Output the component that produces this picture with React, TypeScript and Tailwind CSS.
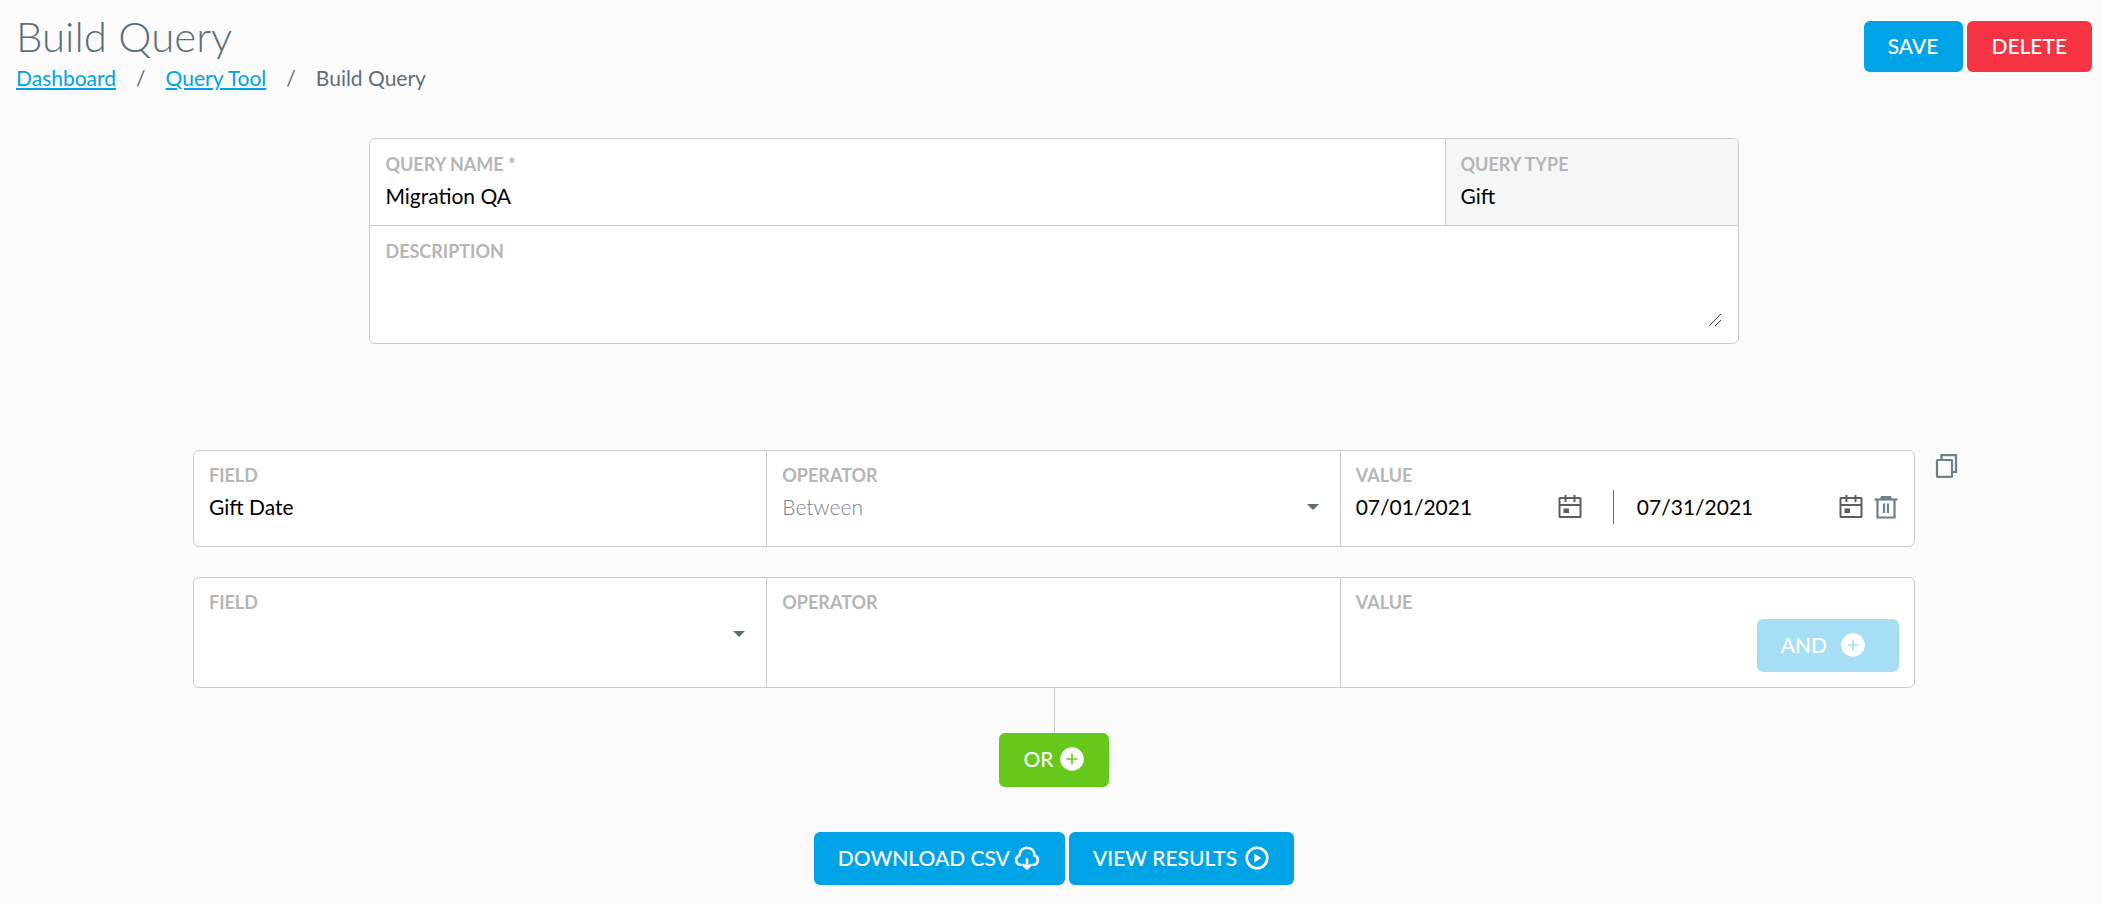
import React, { useState } from "react";

const labelClass = "block text-[18px] leading-6 font-bold uppercase text-[#b5b5b5]";
const inputClass = "w-full min-w-0 bg-transparent text-[21px] leading-10 text-black outline-none";
const selectClass =
  "w-full appearance-none bg-transparent text-[21px] leading-10 font-light text-[#75858c] outline-none";
const buttonClass =
  "inline-flex items-center rounded-md pb-[2px] pl-6 text-[21px] leading-6 font-medium uppercase text-white";

function CalendarIcon() {
  return (
    <svg className="h-6 w-6 shrink-0 text-[#5b5f63]" viewBox="0 0 24 24" fill="none" stroke="currentColor" strokeWidth="2">
      <rect x="1.5" y="3" width="21" height="19" rx="0.5" />
      <path d="M1 10h22M7.5 0v7M16.5 0v7" />
      <rect x="5.5" y="13.5" width="5.5" height="4.5" fill="currentColor" stroke="none" />
    </svg>
  );
}

function TrashIcon() {
  return (
    <svg className="h-6 w-6" viewBox="0 0 24 24" fill="none" stroke="currentColor" strokeWidth="2.2">
      <path d="M0.5 4.5h23" />
      <path d="M6 4l1-3h10l1 3z" fill="currentColor" stroke="none" />
      <path d="M3.5 4.5V22.5h17V4.5" />
      <path d="M10 8.5v9.5M14 8.5v9.5" />
    </svg>
  );
}

function CopyIcon() {
  return (
    <svg className="h-6 w-6" viewBox="0 0 24 24" fill="none" stroke="currentColor" strokeWidth="2.2">
      <rect x="2" y="6" width="15" height="16.8" rx="0.5" />
      <path d="M6.5 6V1.2H21v16.8h-4" />
    </svg>
  );
}

function PlusIcon() {
  return (
    <svg className="h-6 w-6" viewBox="0 0 24 24">
      <path
        fillRule="evenodd"
        fill="currentColor"
        d="M12 0.2a11.8 11.8 0 1 0 0 23.6a11.8 11.8 0 0 0 0-23.6zM11.2 6.5h1.6v4.7h4.7v1.6h-4.7v4.7h-1.6v-4.7H6.5v-1.6h4.7z"
      />
    </svg>
  );
}

function CloudIcon() {
  return (
    <svg className="h-6 w-[26px]" viewBox="0 0 26 24" fill="none" stroke="currentColor" strokeWidth="2.6" strokeLinecap="round" strokeLinejoin="round">
      <path d="M6.5 18.8a4.7 4.7 0 0 1-1-9.2C5.5 5 8.5 1.8 13 1.8s7.5 3.2 7.5 7.8a4.7 4.7 0 0 1-1 9.2" />
      <path d="M13 13.5v8.5M9.5 19l3.5 3.5l3.5-3.5" />
    </svg>
  );
}

function PlayIcon() {
  return (
    <svg className="h-6 w-6" viewBox="0 0 24 24" fill="none" stroke="currentColor" strokeWidth="2.6">
      <circle cx="12" cy="12" r="10.3" />
      <path d="M9.3 7.5v9l7-4.5z" fill="currentColor" stroke="none" />
    </svg>
  );
}

function Caret() {
  return (
    <svg className="pointer-events-none mr-[6px] h-[6px] w-[12px] shrink-0 text-[#5c6c75]" viewBox="0 0 12 6">
      <path d="M0 0h12l-6 6z" fill="currentColor" />
    </svg>
  );
}

function App() {
  const [name, setName] = useState("Migration QA");
  const [description, setDescription] = useState("");
  const [operator, setOperator] = useState("Between");
  const [field, setField] = useState("");
  const [from, setFrom] = useState("07/01/2021");
  const [to, setTo] = useState("07/31/2021");

  return (
    <div className="min-h-screen bg-[#fbfbfb] pt-[11px] pr-[10px] pb-4 pl-4 font-['Lato',sans-serif] text-[#5f6f78]">
      <header className="flex items-start justify-between">
        <div>
          <h1 className="text-[42px] leading-[50px] font-light">Build Query</h1>
          <nav aria-label="Breadcrumb" className="flex gap-5 text-[21px] leading-[34px]">
            <a href="#dashboard" className="text-[#00a3e6] underline">Dashboard</a>
            <span>/</span>
            <a href="#query-tool" className="text-[#00a3e6] underline">Query Tool</a>
            <span>/</span>
            <span>Build Query</span>
          </nav>
        </div>
        <div className="flex gap-1 pt-[10px]">
          <button type="button" className={`${buttonClass} h-[51px] bg-[#00a4e6] pr-[25px]`}>Save</button>
          <button type="button" className={`${buttonClass} h-[51px] bg-[#f63343] pr-[25px]`}>Delete</button>
        </div>
      </header>

      <main className="flex flex-col items-center pt-[43px]">
        <section className="w-[65.95%] overflow-hidden rounded-md border border-[#c8cacb] bg-white">
          <div className="flex border-b border-[#c8cacb]">
            <div className="h-[86px] flex-1 px-[15px] pt-[13px]">
              <label htmlFor="name" className={labelClass}>Query Name *</label>
              <input id="name" className={inputClass} value={name} onChange={(e) => setName(e.target.value)} />
            </div>
            <div className="h-[86px] w-[293px] border-l border-[#c8cacb] bg-[#f5f7f7] px-[15px] pt-[13px]">
              <label htmlFor="type" className={labelClass}>Query Type</label>
              <input id="type" className={inputClass} value="Gift" readOnly />
            </div>
          </div>
          <div className="px-[15px] pt-[13px] pb-4">
            <label htmlFor="description" className={labelClass}>Description</label>
            <div className="relative">
              <textarea
                id="description"
                className="block h-16 w-full resize-none bg-transparent text-[21px] leading-8 text-black outline-none"
                value={description}
                onChange={(e) => setDescription(e.target.value)}
              />
              <svg className="pointer-events-none absolute right-[2px] bottom-px h-3 w-3 text-[#444]" viewBox="0 0 12 12" stroke="currentColor" shapeRendering="crispEdges">
                <path d="M0 12L12 0M6 12l6-6" />
              </svg>
            </div>
          </div>
        </section>

        <div className="grid w-full grid-cols-[1fr_82.95%_1fr] pt-[106px]">
          <section className="col-start-2 flex flex-col items-center gap-[30px]">
            <div className="grid w-full grid-cols-3 divide-x divide-[#c8cacb] rounded-md border border-[#c8cacb] bg-white">
              <div className="h-[95px] px-[15px] pt-3">
                <label htmlFor="field-1" className={labelClass}>Field</label>
                <input id="field-1" className={inputClass} value="Gift Date" readOnly />
              </div>
              <div className="h-[95px] px-[15px] pt-3">
                <label htmlFor="operator-1" className={labelClass}>Operator</label>
                <div className="flex h-10 items-center">
                  <select
                    id="operator-1"
                    className={selectClass}
                    value={operator}
                    onChange={(e) => setOperator(e.target.value)}
                  >
                    <option>Between</option>
                  </select>
                  <Caret />
                </div>
              </div>
              <div className="h-[95px] px-[15px] pt-3">
                <label htmlFor="from" className={labelClass}>Value</label>
                <div className="flex h-10 items-center">
                  <div className="flex flex-1 items-center">
                    <input id="from" className={inputClass} value={from} onChange={(e) => setFrom(e.target.value)} />
                    <CalendarIcon />
                  </div>
                  <div className="mr-[23px] ml-[31px] h-[34px] w-px bg-[#5c6c75]"></div>
                  <div className="flex flex-1 items-center">
                    <input aria-label="Value to" className={inputClass} value={to} onChange={(e) => setTo(e.target.value)} />
                    <CalendarIcon />
                  </div>
                  <button type="button" aria-label="Remove condition" className="mr-px ml-[11px] text-[#6f8088]">
                    <TrashIcon />
                  </button>
                </div>
              </div>
            </div>

            <div className="grid w-full grid-cols-3 divide-x divide-[#c8cacb] rounded-md border border-[#c8cacb] bg-white">
              <div className="h-[109px] px-[15px] pt-3">
                <label htmlFor="field-2" className={labelClass}>Field</label>
                <div className="flex h-10 items-center">
                  <select
                    id="field-2"
                    className={selectClass}
                    value={field}
                    onChange={(e) => setField(e.target.value)}
                  >
                    <option value=""></option>
                  </select>
                  <Caret />
                </div>
              </div>
              <div className="h-[109px] px-[15px] pt-3">
                <span className={labelClass}>Operator</span>
              </div>
              <div className="flex h-[109px] flex-col px-[15px] pt-3">
                <span className={labelClass}>Value</span>
                <button type="button" disabled className={`${buttonClass} mt-[5px] h-[53px] gap-[14px] self-end bg-[#a6def6] pr-[34px]`}>
                  And
                  <PlusIcon />
                </button>
              </div>
            </div>
          </section>
          <div className="pt-1 pl-5">
            <button type="button" aria-label="Duplicate group" className="text-[#6f8088]">
              <CopyIcon />
            </button>
          </div>
        </div>

        <div className="h-[45px] w-px bg-[#c8cacb]"></div>
        <button type="button" className={`${buttonClass} h-[54px] gap-[6px] bg-[#65c81a] pr-[25px]`}>
          Or
          <PlusIcon />
        </button>

        <div className="flex gap-1 pt-[45px]">
          <button type="button" className={`${buttonClass} h-[53px] gap-1 bg-[#00a4e6] pr-[25px]`}>
            Download CSV
            <CloudIcon />
          </button>
          <button type="button" className={`${buttonClass} h-[53px] gap-2 bg-[#00a4e6] pr-[25px]`}>
            View Results
            <PlayIcon />
          </button>
        </div>
      </main>
    </div>
  );
}

export default App;
